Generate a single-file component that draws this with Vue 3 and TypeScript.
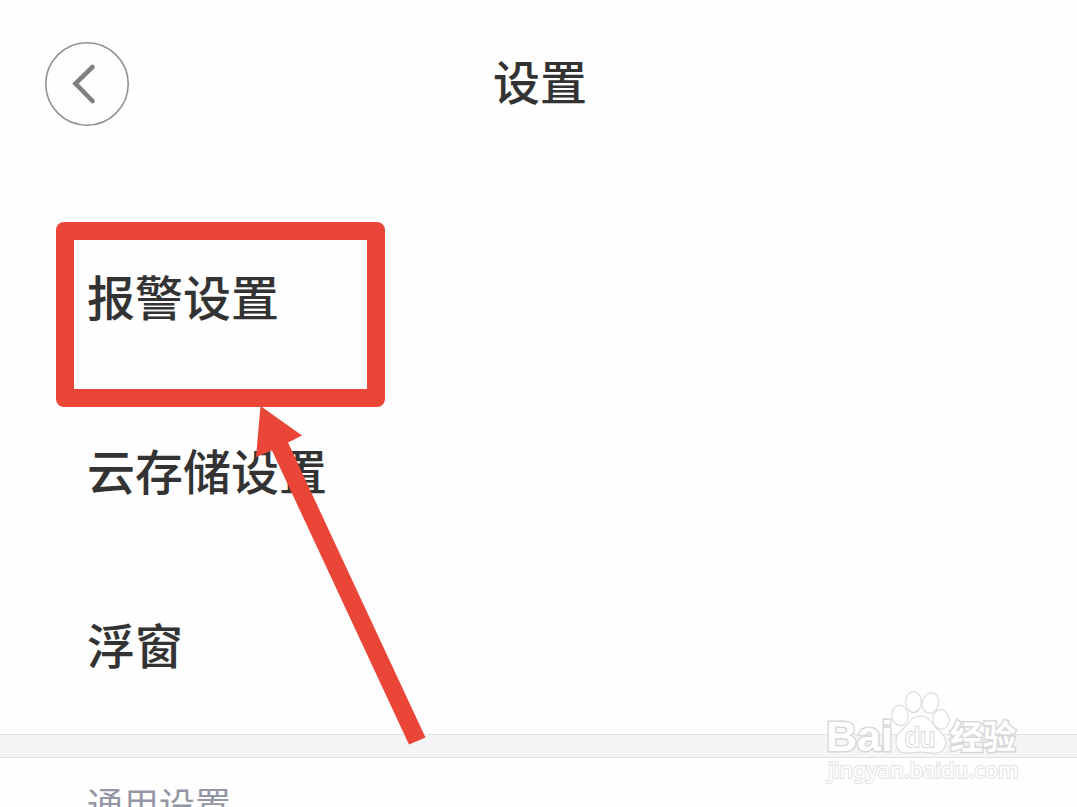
<script setup lang="ts">
interface MenuItem {
  id: string
  label: string
  highlighted: boolean
}

const title = '设置'
const sectionTitle = '通用设置'
const items: MenuItem[] = [
  { id: 'alarm', label: '报警设置', highlighted: true },
  { id: 'cloud', label: '云存储设置', highlighted: false },
  { id: 'float', label: '浮窗', highlighted: false },
]
</script>

<template>
  <main class="page">
    <header class="header">
      <button class="back" type="button" aria-label="返回">
        <svg viewBox="0 0 84 84" fill="none" aria-hidden="true">
          <circle cx="42" cy="42" r="41.2" stroke="#929292" stroke-width="1.6" />
          <path d="M47.5 25 L30.5 41.500 L47.5 59" stroke="#808080" stroke-width="4.6" stroke-linecap="round" />
        </svg>
      </button>
      <h1 class="title">{{ title }}</h1>
    </header>

    <nav class="menu">
      <a v-for="item in items" :key="item.id" class="row" href="#">
        <span>{{ item.label }}</span>
        <span v-if="item.highlighted" class="frame">
          <svg class="arrow" viewBox="0 0 172 340" aria-hidden="true">
            <path d="M4.5 0 L46 29.5 L32 36.500 L169.5 331.500 L153 338.500 L16 44.500 L0 51 Z" fill="#e94638" />
          </svg>
        </span>
      </a>
    </nav>

    <div class="divider"></div>

    <section class="section">
      <h2 class="section-title">{{ sectionTitle }}</h2>
    </section>

    <svg class="watermark" viewBox="0 0 200 100" role="img" aria-label="Baidu 经验 jingyan.baidu.com">
      <g class="ink">
        <text class="brand" x="-1" y="61">Bai</text>
        <ellipse cx="73" cy="25.500" rx="7.6" ry="9.8" transform="rotate(-8 73 25.5)" />
        <ellipse cx="86.500" cy="12" rx="7.3" ry="10" />
        <ellipse cx="103.500" cy="13" rx="7.6" ry="9.8" transform="rotate(12 103.5 13)" />
        <ellipse cx="114" cy="29.500" rx="7.6" ry="9.4" transform="rotate(-8 114 29.5)" />
        <path d="M93 26.500 C87 26.500 84 30 80.500 35 C77 40 69.500 43 69.500 52 C69.500 58 73 62.500 79 62.500 C84 62.500 88 61.500 93 61.500 C99 61.500 103 62.700 108 62.700 C114 62.700 118 58 118 52.500 C118 44 110 40.500 106.500 35.500 C103 30 99 26.500 93 26.500 Z" />
        <text class="du" x="78" y="57">du</text>
        <text class="cn" x="123" y="59">经验</text>
        <text class="site" x="1" y="88">jingyan.baidu.com</text>
      </g>
    </svg>
  </main>
</template>

<style>
html,
body {
  margin: 0;
  background: #fefefe;
}
</style>

<style scoped>
.page {
  position: relative;
  display: flex;
  flex-direction: column;
  height: 100vh;
  overflow: hidden;
  background: #fefefe;
  color: #333;
  font-family: "Noto Sans CJK SC", "Liberation Sans", sans-serif;
}

.header {
  display: grid;
  grid-template-columns: 84px 1fr 84px;
  align-items: center;
  flex: none;
  height: 168px;
  padding: 0 42px 0 45px;
}

.back {
  width: 84px;
  height: 84px;
  padding: 0;
  border: 0;
  border-radius: 50%;
  background: transparent;
  cursor: pointer;
}

.back svg {
  display: block;
  width: 100%;
  height: 100%;
}

.title {
  margin: 0;
  padding-bottom: 8px;
  font-size: 47px;
  font-weight: 500;
  line-height: 72px;
  text-align: center;
}

.menu {
  flex: none;
  padding-top: 44px;
}

.row {
  position: relative;
  display: flex;
  align-items: center;
  box-sizing: border-box;
  height: 174px;
  padding: 0 87px 8px;
  color: inherit;
  font-size: 48px;
  font-weight: 500;
  line-height: 72px;
  text-decoration: none;
}

.row:first-child {
  z-index: 1;
}

.frame {
  position: absolute;
  top: 10px;
  left: 56px;
  box-sizing: border-box;
  width: 329px;
  height: 185px;
  border: 18px solid #e94638;
  border-radius: 8px;
}

.arrow {
  position: absolute;
  top: 166px;
  left: 182px;
  width: 172px;
  height: 340px;
}

.divider {
  box-sizing: border-box;
  flex: none;
  height: 24px;
  border-top: 1px solid #e2e2e2;
  border-bottom: 1px solid #e2e2e2;
  background: #f5f5f5;
}

.section {
  flex: none;
  padding: 18px 87px;
}

.section-title {
  margin: 0;
  color: #9496a5;
  font-size: 36px;
  font-weight: 400;
  line-height: 54px;
}

.watermark {
  position: absolute;
  right: 50px;
  bottom: 17px;
  width: 200px;
  height: 100px;
  overflow: visible;
}

.ink {
  fill: #fff;
  stroke: #d8d8d8;
  stroke-width: 2px;
  paint-order: stroke;
  font-family: "Liberation Sans", "Noto Sans CJK SC", sans-serif;
}

.brand {
  font-size: 43px;
  font-weight: 700;
  stroke-width: 3px;
}

.du {
  font-size: 27px;
}

.cn {
  font-size: 33px;
  font-weight: 700;
  stroke-width: 3px;
}

.site {
  font-family: "Noto Sans", "Liberation Sans", sans-serif;
  font-size: 22px;
  stroke: #e2e2e2;
}
</style>
